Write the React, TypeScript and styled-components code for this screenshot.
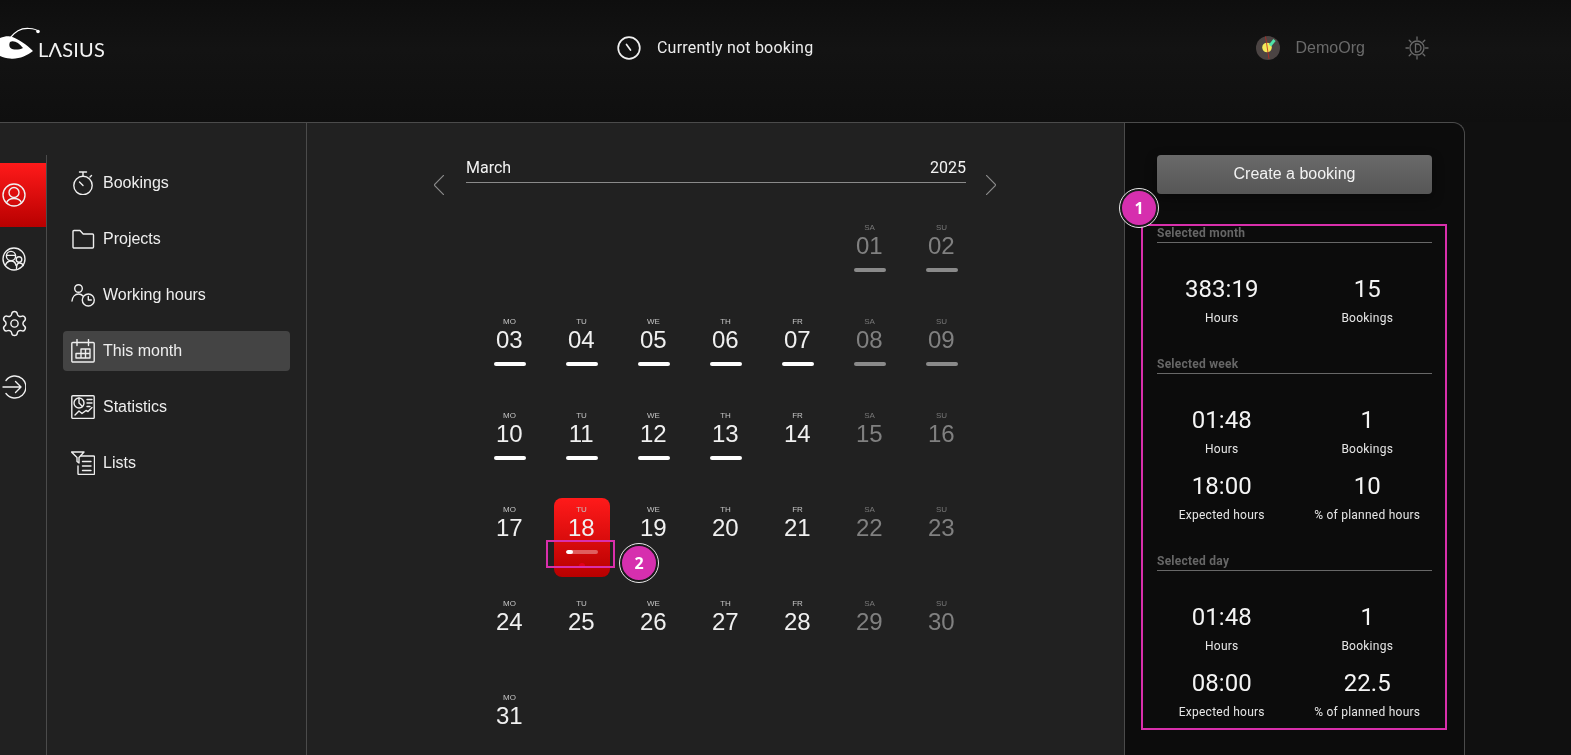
import React from "react";
import styled, { createGlobalStyle } from "styled-components";
import { Settings } from "lucide-react";

const Global = createGlobalStyle`
  html, body { margin: 0; padding: 0; height: 100%; background: #101010; overflow: hidden; }
  #root { height: 100%; }
  * { box-sizing: border-box; }
`;

const Page = styled.div`
  position: relative;
  height: 755px;
  width: 1571px;
  overflow: hidden;
  display: flex;
  flex-direction: column;
  will-change: transform;
  font-family: "Liberation Sans", Arial, sans-serif;
  color: #f0f0f0;
`;

const Header = styled.header`
  height: 122px;
  flex: none;
  display: flex;
  align-items: center;
  padding-bottom: 26px;
  background: linear-gradient(#0e0e0e, #131313 40%, #0f0f0f);
`;

const LogoSlot = styled.div`
  width: 617px;
  flex: none;
  display: flex;
  align-items: center;
  height: 44px;
  margin-top: -10px;
`;

const LogoMark = styled.svg`
  width: 38px;
  height: 44px;
  flex: none;
  display: block;
  overflow: visible;
`;

const LogoWord = styled.span`
  font-family: "Lato", sans-serif;
  font-weight: 400;
  font-size: 20px;
  letter-spacing: 0.2px;
  color: #f4f4f4;
  line-height: 24px;
  margin-top: 12px;
`;

const Status = styled.div`
  width: 639px;
  flex: none;
  display: flex;
  align-items: center;
  gap: 16px;
  font-family: "Roboto", sans-serif;
  font-size: 16px;
  color: #ececec;
  letter-spacing: 0.2px;
`;

const StatusText = styled.span`
  margin-top: -1px;
`;

const StatusIcon = styled.svg`
  width: 24px;
  height: 24px;
  flex: none;
  display: block;
  fill: none;
  stroke: #f0f0f0;
  stroke-width: 1.7;
  stroke-linecap: round;
`;

const Org = styled.div`
  display: flex;
  align-items: center;
  gap: 15.5px;
  font-size: 16px;
  color: #6a6a6a;
`;

const ThemeIcon = styled.svg`
  width: 24px;
  height: 24px;
  margin-left: 25px;
  display: block;
`;

const Shell = styled.div`
  flex: 1;
  width: 1465px;
  min-height: 0;
  display: flex;
  background: #212121;
  border-top: 1px solid #4b4b4b;
  border-right: 1px solid #4b4b4b;
  border-top-right-radius: 12px;
`;

const Rail = styled.nav`
  width: 47px;
  flex: none;
  margin-top: 32px;
  padding-top: 8px;
  border-right: 1px solid #4b4b4b;
`;

const RailItem = styled.div<{ $active?: boolean }>`
  height: 64px;
  display: flex;
  align-items: center;
  padding-left: 2px;
  color: #f0f0f0;
  background: ${(p) => (p.$active ? "linear-gradient(#ff1a1a, #b80000)" : "none")};
`;

const Gear = styled(Settings)`
  width: 29px;
  height: 29px;
  margin-left: -2.5px;
  flex: none;
`;

const NavColumn = styled.nav`
  width: 260px;
  flex: none;
  padding: 40px 16px 0;
  border-right: 1px solid #4b4b4b;
  display: flex;
  flex-direction: column;
  gap: 16px;
`;

const NavItem = styled.div<{ $active?: boolean }>`
  height: 40px;
  display: flex;
  align-items: center;
  gap: 8px;
  padding-left: 8px;
  border-radius: 4px;
  font-size: 16px;
  color: #eeeeee;
  background: ${(p) => (p.$active ? "#444444" : "none")};
`;

const Icon = styled.svg`
  width: 24px;
  height: 24px;
  flex: none;
  display: block;
  fill: none;
  stroke: currentColor;
  stroke-width: 1.4;
  stroke-linecap: round;
  stroke-linejoin: round;
`;

const Main = styled.main`
  width: 818px;
  flex: none;
  padding-top: 35px;
  border-right: 1px solid #4b4b4b;
`;

const MonthBar = styled.div`
  margin-left: 127px;
  display: flex;
  align-items: flex-start;
  gap: 20px;
`;

const Chevron = styled.svg`
  width: 10px;
  height: 20px;
  margin-top: 17px;
  flex: none;
  display: block;
  fill: none;
  stroke: #8a8a8a;
  stroke-width: 1.2;
`;

const MonthTitle = styled.div`
  width: 500px;
  height: 25px;
  margin-left: 2px;
  display: flex;
  justify-content: space-between;
  font-family: "Roboto", sans-serif;
  font-size: 16px;
  line-height: 20px;
  color: #f2f2f2;
  border-bottom: 1px solid #8a8a8a;
`;

const DaysGrid = styled.div`
  width: 504px;
  margin: 21px 0 0 167px;
  display: grid;
  grid-template-columns: repeat(7, 72px);
  row-gap: 15px;
`;

const Day = styled.div<{ $offset?: number; $today?: boolean }>`
  grid-column-start: ${(p) => p.$offset ?? "auto"};
  justify-self: center;
  width: 56px;
  height: 79px;
  padding-top: 7px;
  border-radius: 8px;
  display: flex;
  flex-direction: column;
  align-items: center;
  background: ${(p) => (p.$today ? "linear-gradient(#ff1a1a, #b80000)" : "none")};
`;

const DayName = styled.div<{ $muted?: boolean }>`
  font-size: 8px;
  line-height: 9px;
  margin-right: 1px;
  color: ${(p) => (p.$muted ? "#787878" : "#c4c4c4")};
`;

const DayNumber = styled.div<{ $muted?: boolean }>`
  font-size: 24px;
  line-height: 28px;
  margin-right: 1.5px;
  color: ${(p) => (p.$muted ? "#808080" : "#f0f0f0")};
`;

const DayBar = styled.div<{ $muted?: boolean; $track?: boolean }>`
  width: 32px;
  height: 4px;
  margin-top: 8px;
  border-radius: 2px;
  overflow: hidden;
  background: ${(p) => (p.$track ? "rgba(255,255,255,0.35)" : p.$muted ? "#8a8a8a" : "#ffffff")};
`;

const DayBarFill = styled.div`
  height: 100%;
  background: #ffffff;
  border-radius: 2px;
`;

const TodayDot = styled.div`
  width: 6px;
  height: 5px;
  margin-top: 9px;
  border-radius: 50%;
  background: #e2001c;
`;

const Aside = styled.aside`
  width: 339px;
  flex: none;
  padding: 32px 32px 0;
  background: #0c0c0c;
  border-top-right-radius: 12px;
  display: flex;
  flex-direction: column;
  gap: 30px;
`;

const CreateButton = styled.div`
  height: 39px;
  flex: none;
  margin-bottom: 1px;
  padding-bottom: 2px;
  display: flex;
  align-items: center;
  justify-content: center;
  border-radius: 4px;
  font-size: 16px;
  color: #f2f2f2;
  background: linear-gradient(#6a6a6a, #565656);
  box-shadow: 0 4px 12px rgba(0, 0, 0, 0.4);
`;

const Section = styled.section``;

const SectionTitle = styled.div`
  font-family: "Roboto", sans-serif;
  font-weight: 700;
  font-size: 12px;
  line-height: 14px;
  letter-spacing: 0.25px;
  color: #666666;
  padding-top: 1px;
  border-bottom: 1px solid #686868;
  height: 18px;
`;

const Stats = styled.div`
  display: grid;
  grid-template-columns: 1fr 1fr;
  column-gap: 16px;
  row-gap: 13px;
  padding-top: 30px;
`;

const Stat = styled.div`
  text-align: center;
  font-family: "Roboto", sans-serif;
`;

const StatValue = styled.div`
  font-size: 24px;
  line-height: 32px;
  color: #f4f4f4;
`;

const StatLabel = styled.div`
  font-size: 12px;
  line-height: 16px;
  margin-top: 5px;
  letter-spacing: 0.25px;
  color: #e6e6e6;
`;

const Highlight = styled.div<{ $x: number; $y: number; $w: number; $h: number }>`
  position: absolute;
  left: ${(p) => p.$x}px;
  top: ${(p) => p.$y}px;
  width: ${(p) => p.$w}px;
  height: ${(p) => p.$h}px;
  border: 2px solid #d92fac;
`;

const Badge = styled.div<{ $x: number; $y: number }>`
  position: absolute;
  left: ${(p) => p.$x}px;
  top: ${(p) => p.$y}px;
  width: 38px;
  height: 38px;
  border-radius: 50%;
  background: #d62fae;
  border: 2px solid #1a1a1a;
  outline: 1px solid #e8e8e8;
  display: flex;
  align-items: center;
  justify-content: center;
  font-family: "Open Sans", sans-serif;
  font-weight: 700;
  font-size: 16px;
  color: #fff;
`;

const NAMES = ["MO", "TU", "WE", "TH", "FR", "SA", "SU"];
const WITH_BAR = [1, 2, 3, 4, 5, 6, 7, 8, 9, 10, 11, 12, 13];

const days = Array.from({ length: 31 }, (_, i) => {
  const n = i + 1;
  const col = (n + 4) % 7;
  return { n, col, name: NAMES[col], muted: col >= 5 };
});

const sections = [
  { title: "Selected month", stats: [["383:19", "Hours"], ["15", "Bookings"]] },
  {
    title: "Selected week",
    stats: [["01:48", "Hours"], ["1", "Bookings"], ["18:00", "Expected hours"], ["10", "% of planned hours"]],
  },
  {
    title: "Selected day",
    stats: [["01:48", "Hours"], ["1", "Bookings"], ["08:00", "Expected hours"], ["22.5", "% of planned hours"]],
  },
];

const UserIcon = () => (
  <Icon viewBox="0 0 24 24">
    <circle cx="12" cy="12" r="11" />
    <circle cx="12" cy="9.5" r="5" />
    <path d="M4.5 20c1-3 4-4.500 7.500-4.500s6.500 1.500 7.500 4.500" />
  </Icon>
);
const GroupIcon = () => (
  <Icon viewBox="0 0 24 24">
    <circle cx="12" cy="12" r="11" />
    <circle cx="9" cy="9" r="4.600" />
    <path d="M4.800 8.400h8.400" />
    <circle cx="17" cy="12.500" r="2.800" />
    <path d="M3.500 18c1-2.600 3-4 5.500-4s4.500 1.400 5 4.500M14.500 21.500c0-3 1-5.500 3-5.500s3.200 1 3.800 2.500" />
  </Icon>
);
const LogoutIcon = () => (
  <Icon viewBox="0 0 24 24">
    <path d="M4 5.500A11 11 0 1 1 4 18.500" />
    <path d="M1 12h18M13.500 6.500 19 12l-5.500 5.500" />
  </Icon>
);
const StopwatchIcon = () => (
  <Icon viewBox="0 0 24 24">
    <circle cx="12" cy="14.500" r="9.200" />
    <path d="M8.500 1h7M12 1v4M19 6l1.500-1.500M12 14.500 8.500 11" />
  </Icon>
);
const FolderIcon = () => (
  <Icon viewBox="0 0 24 24">
    <path d="M3 3.500h6l3.200 3.500h9.300a1 1 0 0 1 1 1V20a1 1 0 0 1-1 1H3a1 1 0 0 1-1-1V4.500a1 1 0 0 1 1-1z" />
  </Icon>
);
const HoursIcon = () => (
  <Icon viewBox="0 0 24 24">
    <circle cx="7.500" cy="5.500" r="3.800" />
    <path d="M1 18c.5-4 3-7 6.500-7 2 0 3.500.8 4.500 2" />
    <circle cx="17.300" cy="17" r="6" />
    <path d="M17.300 13.500V17h3" />
  </Icon>
);
const MonthIcon = () => (
  <Icon viewBox="0 0 24 24">
    <rect x="0.800" y="3.500" width="22.400" height="19.500" rx="1" />
    <path d="M6 .5v6M17.500.5v6" />
    <path d="M10 10h9v9H5v-4.500h14M10 10v9M14.500 10v9" />
  </Icon>
);
const StatsIcon = () => (
  <Icon viewBox="0 0 24 24">
    <rect x="0.800" y="0.800" width="22.400" height="22.600" rx="1" />
    <circle cx="8" cy="8" r="5" />
    <path d="M8 3v5l3.500 3.500M16 4.500h5M16 8h5M16 11.500h3M4 20l4-4 3 2.500 4-3 2 1 4-4" />
  </Icon>
);
const ListsIcon = () => (
  <Icon viewBox="0 0 24 24">
    <path d="M.5 1h12.500l-5 5.500V12L6 10.500V6.500z" />
    <path d="M10 5h12.500a1 1 0 0 1 1 1v16.500a1 1 0 0 1-1 1H8a1 1 0 0 1-1-1V15" />
    <path d="M11.500 10.500h8.500M11.500 15h8.500M11.500 19.500h8.500" />
  </Icon>
);

const railItems = [<UserIcon />, <GroupIcon />, <Gear strokeWidth={1.2} />, <LogoutIcon />];
const navItems: [React.ReactNode, string][] = [
  [<StopwatchIcon />, "Bookings"],
  [<FolderIcon />, "Projects"],
  [<HoursIcon />, "Working hours"],
  [<MonthIcon />, "This month"],
  [<StatsIcon />, "Statistics"],
  [<ListsIcon />, "Lists"],
];

export default function App() {
  return (
    <Page>
      <Global />
      <Header>
        <LogoSlot aria-label="Lasius">
          <LogoMark viewBox="0 0 38 44">
            <path
              fillRule="evenodd"
              fill="#fff"
              d="M-2 18C3 15.500 7 15 10 15.500C18 17 28 25 33 30C27 35 18 38.500 10 37.500C6 37 2 36 -2 34ZM10 21C14 19 19 22 23 27C19 29 13 29 10.500 27C9 25.500 9 23 10 21Z"
            />
            <path d="M10 17C15 11 20 7 29 7.500C33 7.800 36 8 38 10" fill="none" stroke="#fff" strokeWidth="1.200" />
            <circle cx="38" cy="10.500" r="1.800" fill="#fff" />
          </LogoMark>
          <LogoWord>LΛSIUS</LogoWord>
        </LogoSlot>
        <Status>
          <StatusIcon viewBox="0 0 24 24">
            <circle cx="12" cy="12" r="10.800" />
            <path d="M9.500 8.500 13.500 14" />
          </StatusIcon>
          <StatusText>Currently not booking</StatusText>
        </Status>
        <Org>
          <svg width="24" height="24" viewBox="0 0 24 24">
            <circle cx="12" cy="12" r="12" fill="#4b4443" />
            <circle cx="11" cy="11.500" r="4.800" fill="#f3e95a" />
            <path d="M14 9.500 18.500 4" stroke="#4fe3a8" strokeWidth="3" />
            <path d="M9.500 0.500 13 23" stroke="#c0271e" strokeWidth="0.800" />
          </svg>
          DemoOrg
          <ThemeIcon viewBox="0 0 24 24" fill="none" stroke="#6a6a6a" strokeWidth="1.300" strokeLinecap="round">
            <circle cx="12" cy="12" r="7" />
            <path d="M12 1v2.500M12 20.500V23M1 12h2.500M20.500 12H23M4.200 4.200 6 6M18 18l1.800 1.800M4.200 19.800 6 18M18 6l1.800-1.800" />
            <path d="M10.500 8h1.500a4 4 0 0 1 0 8h-1.500z" />
          </ThemeIcon>
        </Org>
      </Header>
      <Shell>
        <Rail>
          {railItems.map((icon, i) => (
            <RailItem key={i} $active={i === 0}>
              {icon}
            </RailItem>
          ))}
        </Rail>
        <NavColumn>
          {navItems.map(([icon, label]) => (
            <NavItem key={label} $active={label === "This month"}>
              {icon}
              {label}
            </NavItem>
          ))}
        </NavColumn>
        <Main>
          <MonthBar>
            <Chevron viewBox="0 0 10 20">
              <path d="M10 0 0 10l10 10" />
            </Chevron>
            <MonthTitle>
              <span>March</span>
              <span>2025</span>
            </MonthTitle>
            <Chevron viewBox="0 0 10 20">
              <path d="M0 0l10 10L0 20" />
            </Chevron>
          </MonthBar>
          <DaysGrid>
            {days.map((d) => (
              <Day key={d.n} $offset={d.n === 1 ? 6 : undefined} $today={d.n === 18}>
                <DayName $muted={d.muted}>{d.name}</DayName>
                <DayNumber $muted={d.muted}>{String(d.n).padStart(2, "0")}</DayNumber>
                {WITH_BAR.includes(d.n) && <DayBar $muted={d.muted} />}
                {d.n === 18 && (
                  <>
                    <DayBar $track>
                      <DayBarFill style={{ width: "22.5%" }} />
                    </DayBar>
                    <TodayDot />
                  </>
                )}
              </Day>
            ))}
          </DaysGrid>
        </Main>
        <Aside>
          <CreateButton>Create a booking</CreateButton>
          {sections.map((s) => (
            <Section key={s.title}>
              <SectionTitle>{s.title}</SectionTitle>
              <Stats>
                {s.stats.map(([value, label]) => (
                  <Stat key={label}>
                    <StatValue>{value}</StatValue>
                    <StatLabel>{label}</StatLabel>
                  </Stat>
                ))}
              </Stats>
            </Section>
          ))}
        </Aside>
      </Shell>
      <Highlight $x={1141} $y={224} $w={306} $h={506} />
      <Highlight $x={546} $y={540} $w={69} $h={28} />
      <Badge $x={1120} $y={189}>1</Badge>
      <Badge $x={620} $y={544}>2</Badge>
    </Page>
  );
}
